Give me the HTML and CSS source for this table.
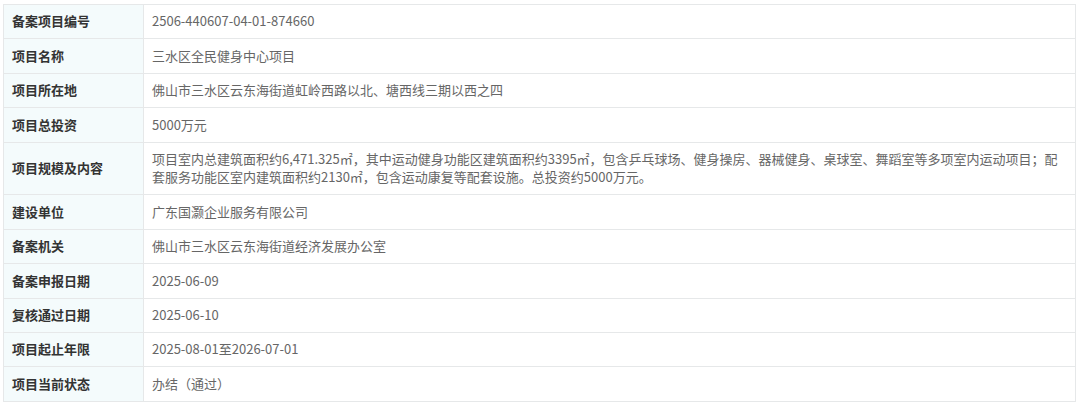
FILE: index.html
```html
<!DOCTYPE html>
<html lang="zh-CN">
<head>
  <meta charset="UTF-8">
  <title>项目备案信息</title>
  <link rel="stylesheet" href="styles.css">
</head>
<body>
  <table class="info-table">
    <tr>
      <th>备案项目编号</th>
      <td>2506-440607-04-01-874660</td>
    </tr>
    <tr>
      <th>项目名称</th>
      <td>三水区全民健身中心项目</td>
    </tr>
    <tr>
      <th>项目所在地</th>
      <td>佛山市三水区云东海街道虹岭西路以北、塘西线三期以西之四</td>
    </tr>
    <tr>
      <th>项目总投资</th>
      <td>5000万元</td>
    </tr>
    <tr>
      <th>项目规模及内容</th>
      <td>项目室内总建筑面积约6,471.325㎡，其中运动健身功能区建筑面积约3395㎡，包含乒乓球场、健身操房、器械健身、桌球室、舞蹈室等多项室内运动项目；配套服务功能区室内建筑面积约2130㎡，包含运动康复等配套设施。总投资约5000万元。</td>
    </tr>
    <tr>
      <th>建设单位</th>
      <td>广东国灏企业服务有限公司</td>
    </tr>
    <tr>
      <th>备案机关</th>
      <td>佛山市三水区云东海街道经济发展办公室</td>
    </tr>
    <tr>
      <th>备案申报日期</th>
      <td>2025-06-09</td>
    </tr>
    <tr>
      <th>复核通过日期</th>
      <td>2025-06-10</td>
    </tr>
    <tr>
      <th>项目起止年限</th>
      <td>2025-08-01至2026-07-01</td>
    </tr>
    <tr>
      <th>项目当前状态</th>
      <td>办结（通过）</td>
    </tr>
  </table>
</body>
</html>
```

FILE: styles.css
```css
body {
  margin: 0;
  padding: 4px 4px 0 3px;
  background: #ffffff;
  font-family: "Noto Sans CJK SC", "Noto Sans", sans-serif;
  font-size: 13px;
}

.info-table {
  width: 1073px;
  border-collapse: collapse;
  border: 1px solid #e6e8e9;
}

.info-table th,
.info-table td {
  border: 1px solid #e6e8e9;
  padding: 7.45px 8px;
  line-height: 18.5px;
  text-align: left;
  vertical-align: middle;
}

.info-table th {
  width: 123px;
  background: #f4fbfc;
  color: #333333;
  font-weight: bold;
}

.info-table td {
  color: #666666;
  font-weight: normal;
}
```
